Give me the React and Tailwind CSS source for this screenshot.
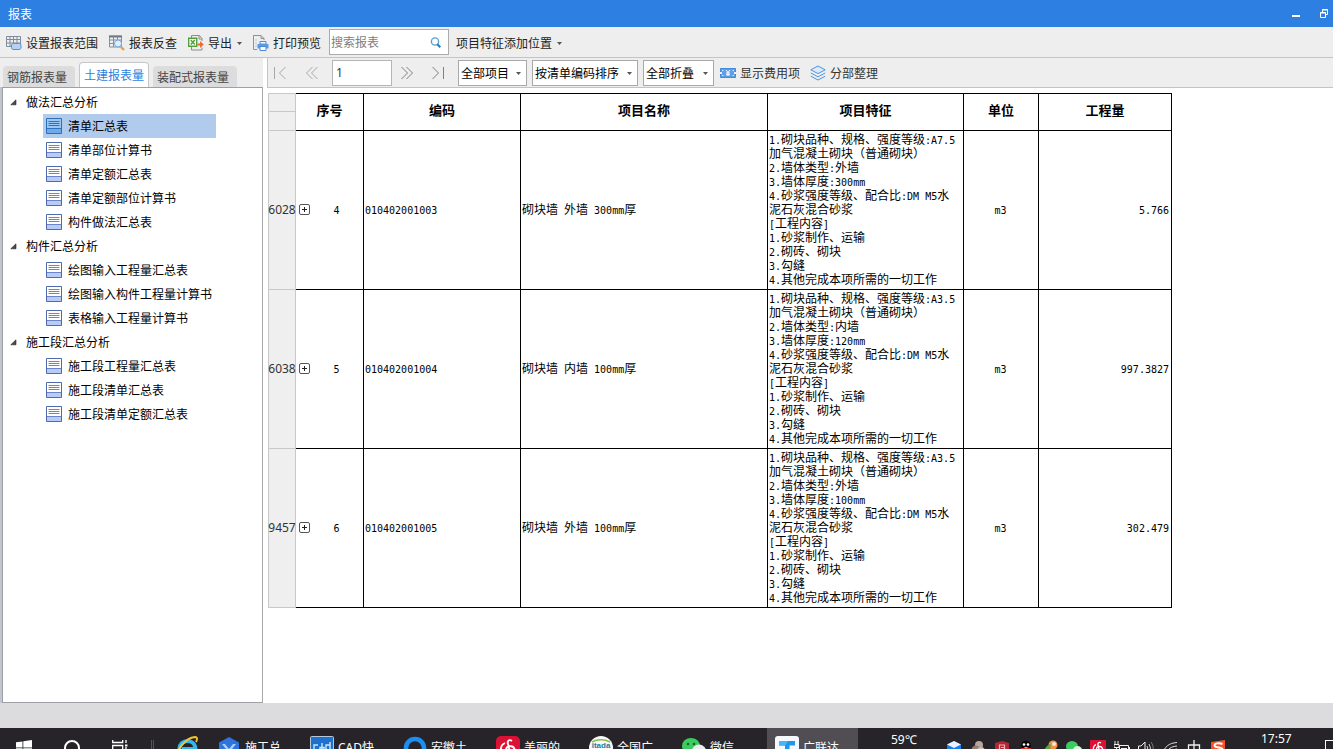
import { useState } from "react";

const tree = [
  { name: "做法汇总分析", items: ["清单汇总表", "清单部位计算书", "清单定额汇总表", "清单定额部位计算书", "构件做法汇总表"] },
  { name: "构件汇总分析", items: ["绘图输入工程量汇总表", "绘图输入构件工程量计算书", "表格输入工程量计算书"] },
  { name: "施工段汇总分析", items: ["施工段工程量汇总表", "施工段清单汇总表", "施工段清单定额汇总表"] },
];

const features = (grade, wall, thick) => [
  `1.砌块品种、规格、强度等级:${grade}`,
  "加气混凝土砌块（普通砌块）",
  `2.墙体类型:${wall}`,
  `3.墙体厚度:${thick}`,
  "4.砂浆强度等级、配合比:DM M5水",
  "泥石灰混合砂浆",
  "[工程内容]",
  "1.砂浆制作、运输",
  "2.砌砖、砌块",
  "3.勾缝",
  "4.其他完成本项所需的一切工作",
];

const rows = [
  { id: "6028", no: "4", code: "010402001003", name: "砌块墙 外墙 300mm厚", feat: features("A7.5", "外墙", "300mm"), unit: "m3", qty: "5.766" },
  { id: "6038", no: "5", code: "010402001004", name: "砌块墙 内墙 100mm厚", feat: features("A3.5", "内墙", "120mm"), unit: "m3", qty: "997.3827" },
  { id: "9457", no: "6", code: "010402001005", name: "砌块墙 外墙 100mm厚", feat: features("A3.5", "外墙", "100mm"), unit: "m3", qty: "302.479" },
];

/* Latin runs are set in a monospaced face whose advance is half of a Han character. */
function Mixed({ text }) {
  return text.split(/([\x20-\x7e]+)/).map((part, i) =>
    i % 2 ? (
      <span key={i} className="whitespace-pre font-['DejaVu_Sans_Mono',monospace] text-[10px] leading-none">{part}</span>
    ) : (
      part
    )
  );
}

function Caret({ className = "" }) {
  return (
    <svg className={className} width="5" height="3" viewBox="0 0 5 3" aria-hidden="true">
      <path d="M0 0h5L2.5 3z" fill="#555" />
    </svg>
  );
}

function RangeIcon() {
  return (
    <svg width="16" height="16" viewBox="0 0 16 16" fill="none" aria-hidden="true">
      <path d="M.5 1.500h14v10H.5zM.5 4.500h14M.5 8h14M4 1.500v10M7.500 1.500v10M11 1.500v10" stroke="#7e8c9e" />
      <path d="M7.500 8.500h5a2 2 0 0 1 2.500 2v1.500a2 2 0 0 1-2 2.500H8a2 2 0 0 1-2.500-2V11a2 2 0 0 1 2-2.500z" fill="#b5d2f3" stroke="#5b8fc9" />
    </svg>
  );
}

function CheckIcon() {
  return (
    <svg width="16" height="16" viewBox="0 0 16 16" fill="none" aria-hidden="true">
      <path d="M.5 1h12v11H.5zM.5 5h12M.5 8.500h12M4.500 1v11M8.500 1v11" stroke="#8490a0" />
      <path d="M0 .5h13v2H0z" fill="#6e7b8c" />
      <circle cx="9" cy="8.500" r="3.500" fill="#e3effc" stroke="#78a7df" />
      <path d="M12 12l3 3" stroke="#eda13e" strokeWidth="2.400" />
    </svg>
  );
}

function ExportIcon() {
  return (
    <svg width="16" height="16" viewBox="0 0 16 16" fill="none" aria-hidden="true">
      <path d="M3.500 3V.5h8l2.500 3V6M3.500 12v3H14v-2.500" stroke="#8c8c8c" fill="none" />
      <path d="M11 .5V4h3" stroke="#8c8c8c" />
      <path d="M.7 3.200h8v8h-8z" fill="#fff" stroke="#52a03c" strokeWidth="1.400" />
      <path d="M2.800 5l4 4.500M6.800 5l-4 4.500" stroke="#52a03c" strokeWidth="1.500" />
      <path d="M9.500 8.500H12V6l3.800 3.500L12 13v-2.500H9.500z" fill="#ee6c2c" />
    </svg>
  );
}

function PrintIcon() {
  return (
    <svg width="16" height="16" viewBox="0 0 16 16" fill="none" aria-hidden="true">
      <path d="M4 14.500H.5V.5h7.500l3 3V5M8 .5v3h3" stroke="#8793a3" />
      <path d="M2.500 5h1M2.500 8h1M2.500 11h1" stroke="#6ca0dc" />
      <path d="M7 6.500h6V9H7z" fill="#fff" stroke="#4a8cd8" />
      <path d="M4.500 9h11v4.500h-11z" fill="#5b9ae0" />
      <path d="M7 11.500h6v4H7z" fill="#fff" stroke="#4a8cd8" />
    </svg>
  );
}

function SheetIcon({ active }) {
  return (
    <svg width="16" height="16" viewBox="0 0 16 16" fill="none" aria-hidden="true" className="shrink-0">
      <path d="M.5.5h15v15H.5z" fill={active ? "#9cc6f3" : "#fff"} stroke={active ? "#2f6fb5" : "#5068ac"} />
      <path d="M1 11h14v4H1z" fill={active ? "#6fabea" : "#b9cbfa"} />
      <path d="M2.500 3.500h11M2.500 5.500h11M2.500 7.500h11M1 10.500h14" stroke={active ? "#2f73bd" : "#6b86c8"} />
    </svg>
  );
}

function ToolButton({ icon, children, caret }) {
  return (
    <button type="button" className="flex items-center gap-1 whitespace-nowrap">
      {icon}
      <span>{children}</span>
      {caret && <Caret className="ml-px" />}
    </button>
  );
}

function Pick({ label, width, options }) {
  return (
    <div className={`relative h-[26px] ${width}`}>
      <select aria-label={label} className="h-full w-full appearance-none border border-[#a9a9a9] bg-white pl-[2px] text-xs text-black outline-none">
        {options.map((o) => (
          <option key={o}>{o}</option>
        ))}
      </select>
      <Caret className="pointer-events-none absolute right-[6px] top-[12px]" />
    </div>
  );
}

function PageButton({ label, d, dim }) {
  return (
    <button type="button" aria-label={label} className="flex h-full w-6 items-center justify-center">
      <svg width="14" height="14" viewBox="0 0 14 14" fill="none" stroke={dim ? "#a8a8a8" : "#808080"} aria-hidden="true">
        <path d={d} />
      </svg>
    </button>
  );
}

function TitleBar() {
  return (
    <header className="flex h-[27px] shrink-0 items-center bg-[#2d80e1] pl-2 text-xs text-white">
      <h1>报表</h1>
      <div className="ml-auto flex gap-[10px]">
        <button type="button" aria-label="最小化" className="flex h-[27px] w-[18px] items-center justify-center">
          <svg width="8" height="9" viewBox="0 0 8 9" aria-hidden="true"><path d="M0 6h8v2H0z" fill="#fff" /></svg>
        </button>
        <button type="button" aria-label="还原" className="flex h-[27px] w-[18px] items-center justify-center">
          <svg width="8" height="9" viewBox="0 0 8 9" fill="none" stroke="#fff" aria-hidden="true">
            <path d="M2.500 3V.5h5v5H6M2 1h6" />
            <path d="M.5 3.500h5v5h-5zM0 4h6" />
          </svg>
        </button>
      </div>
    </header>
  );
}

function Toolbar() {
  return (
    <div className="flex h-[31px] shrink-0 items-center border-b border-[#c4c4c4] bg-[#eee] pl-[6px] text-xs text-[#222]">
      <div className="flex items-center gap-[11px] pt-[2px]">
        <ToolButton icon={<RangeIcon />}>设置报表范围</ToolButton>
        <ToolButton icon={<CheckIcon />}>报表反查</ToolButton>
        <ToolButton icon={<ExportIcon />} caret>导出</ToolButton>
        <ToolButton icon={<PrintIcon />}>打印预览</ToolButton>
      </div>
      <div className="ml-2 mr-[7px] flex h-[26px] w-[120px] items-center border border-[#ababab] bg-white pr-[7px]">
        <input type="search" aria-label="搜索报表" placeholder="搜索报表" className="w-full min-w-0 flex-1 pl-px text-xs outline-none placeholder:text-[#808080]" />
        <svg width="11" height="11" viewBox="0 0 11 11" fill="none" aria-hidden="true">
          <circle cx="5" cy="4.500" r="3.600" stroke="#5a9fd0" strokeWidth="1.400" />
          <path d="M7.300 7.300l3 3" stroke="#2f78b4" strokeWidth="2" />
        </svg>
      </div>
      <div className="flex pt-[2px]">
        <ToolButton caret>项目特征添加位置</ToolButton>
      </div>
    </div>
  );
}

function Sidebar() {
  const [selected, setSelected] = useState("清单汇总表");
  const [closed, setClosed] = useState({});
  const tabs = ["钢筋报表量", "土建报表量", "装配式报表量"];
  return (
    <aside className="flex w-[263px] shrink-0 flex-col bg-[#eee] text-xs">
      <div role="tablist" className="flex h-[29px] shrink-0 items-end gap-1 pl-[3px]">
        {tabs.map((t, i) => (
          <button
            key={t}
            type="button"
            role="tab"
            aria-selected={i === 1}
            className={
              i === 1
                ? "h-[25px] rounded-t border border-b-0 border-[#c6c6c6] bg-white px-1 text-[#2d7fe0]"
                : "h-[21px] rounded-t bg-[#dcdcdc] pl-1 pr-2 text-[#444]"
            }
          >
            {t}
          </button>
        ))}
      </div>
      <div className="flex min-h-0 flex-1 bg-[#c3c5cd] pl-[2px]">
        <nav aria-label="报表" className="flex-1 overflow-hidden border border-[#9da0a6] border-r-[#a8a8a8] bg-white pt-[2px] text-black">
          {tree.map((g) => (
            <div key={g.name}>
              <button
                type="button"
                aria-expanded={!closed[g.name]}
                onClick={() => setClosed({ ...closed, [g.name]: !closed[g.name] })}
                className="flex h-6 items-center gap-[9px] pl-[7px]"
              >
                <svg width="7" height="7" viewBox="0 0 7 7" aria-hidden="true"><path d="M6 .8v5H.8z" fill="#4a4a4a" stroke="#222" strokeWidth=".6" /></svg>
                {g.name}
              </button>
              {!closed[g.name] && (
                <ul className="pl-10">
                  {g.items.map((it) => (
                    <li key={it}>
                      <button
                        type="button"
                        onClick={() => setSelected(it)}
                        className={`flex h-6 w-[173px] items-center gap-[6px] whitespace-nowrap pl-[3px] ${selected === it ? "bg-[#b1cbed]" : ""}`}
                      >
                        <SheetIcon active={selected === it} />
                        {it}
                      </button>
                    </li>
                  ))}
                </ul>
              )}
            </div>
          ))}
        </nav>
      </div>
    </aside>
  );
}

function ReportBar() {
  return (
    <div className="flex h-[30px] shrink-0 items-center border-b border-l border-[#c4c4c4] bg-[#eee] text-xs text-[#333]">
      <div className="flex h-full gap-2">
        <PageButton dim label="第一页" d="M1.500 1v12M12.500 1l-6 6 6 6" />
        <PageButton dim label="上一页" d="M7.500 1l-6 6 6 6M12.500 1l-6 6 6 6" />
      </div>
      <input aria-label="页码" defaultValue="1" className="ml-2 h-[26px] w-[60px] border border-[#b5b5b5] bg-white pl-[3px] font-['Noto_Sans',sans-serif] outline-none" />
      <div className="ml-[3px] flex h-full gap-[7px]">
        <PageButton label="下一页" d="M1.500 1l6 6-6 6M6.500 1l6 6-6 6" />
        <PageButton label="最后一页" d="M1.500 1l6 6-6 6M12.500 1v12" />
      </div>
      <div className="ml-2 flex gap-[5px]">
        <Pick label="项目" width="w-[69px]" options={["全部项目"]} />
        <Pick label="排序" width="w-[106px]" options={["按清单编码排序"]} />
        <Pick label="折叠" width="w-[71px]" options={["全部折叠"]} />
      </div>
      <div className="ml-[6px] flex gap-[10px]">
        <ToolButton
          icon={
            <svg width="16" height="16" viewBox="0 0 16 16" fill="none" aria-hidden="true">
              <path d="M.5 3.500h15v9H.5z" fill="#5d9ee6" stroke="#4389dc" />
              <path d="M6 5l2 2.500L10 5M8 7.500V11M6 8h4M6 9.700h4" stroke="#fff" />
              <path d="M2 5.500h1.500M2 10.500h1.500M12.500 5.500H14M12.500 10.500H14" stroke="#d8e9fb" />
              <path d="M0 7v2h2V7zM14 7v2h2V7z" fill="#eee" />
            </svg>
          }
        >
          显示费用项
        </ToolButton>
        <ToolButton
          icon={
            <svg width="16" height="16" viewBox="0 0 16 16" fill="none" stroke="#4d94df" aria-hidden="true">
              <path d="M8 1l7.200 3.800L8 8.600.8 4.800z" fill="#dcebfb" />
              <path d="M.8 8L8 11.800 15.200 8M.8 11.200L8 15l7.200-3.800" />
            </svg>
          }
        >
          分部整理
        </ToolButton>
      </div>
    </div>
  );
}

function ReportTable() {
  const head = "border-b border-r border-t border-black px-0 pt-0 pb-1 text-[13px] font-bold";
  const cell = "border-b border-r border-black pb-[2px] pl-px pr-[2px] pt-0";
  const side = "border-b border-x border-[#c8c8c8] bg-[#efefef] p-0";
  return (
    <table className="w-[904px] table-fixed border-separate border-spacing-0 font-['Noto_Sans_CJK_SC',sans-serif] text-xs leading-[14px] text-black">
      <colgroup>
        <col className="w-[28px]" />
        <col className="w-[68px]" />
        <col className="w-[157px]" />
        <col className="w-[247px]" />
        <col className="w-[196px]" />
        <col className="w-[75px]" />
        <col className="w-[133px]" />
      </colgroup>
      <thead>
        <tr className="h-[19px]">
          <td className={`${side} border-t`} />
          {["序号", "编码", "项目名称", "项目特征", "单位", "工程量"].map((h) => (
            <th key={h} rowSpan={2} scope="col" className={head}>{h}</th>
          ))}
        </tr>
        <tr className="h-[19px]">
          <td className={side} />
        </tr>
      </thead>
      <tbody>
        {rows.map((r) => (
          <tr key={r.id} className="h-[159px]">
            <th scope="row" className={`${side} font-['Noto_Sans',sans-serif] text-xs font-normal text-[#333]`}>
              <div className="flex justify-center">{r.id}</div>
            </th>
            <td className="border-b border-r border-black px-0 pb-[2px] pt-0">
              <div className="flex items-center pl-[3px]">
                <button type="button" aria-label="展开" className="flex">
                  <svg width="11" height="11" viewBox="0 0 11 11" fill="none" aria-hidden="true">
                    <rect x=".5" y=".5" width="10" height="10" rx="1.500" stroke="#555" />
                    <path d="M3 5.500h5M5.500 3v5" stroke="#222" />
                  </svg>
                </button>
                <span className="flex-1 text-center"><Mixed text={r.no} /></span>
              </div>
            </td>
            <td className={cell}><Mixed text={r.code} /></td>
            <td className={cell}><Mixed text={r.name} /></td>
            <td className={cell}>
              {r.feat.map((line) => (
                <div key={line} className="h-[14px] whitespace-nowrap"><Mixed text={line} /></div>
              ))}
            </td>
            <td className={`${cell} text-center`}><Mixed text={r.unit} /></td>
            <td className={`${cell} text-right`}><Mixed text={r.qty} /></td>
          </tr>
        ))}
      </tbody>
    </table>
  );
}

const apps = [
  {
    name: "施工总",
    icon: (
      <>
        <path d="M12 1l10 5.500v11L12 23 2 17.500v-11z" fill="#2f74dc" />
        <path d="M5 8h3l4 5 4-5h3l-5.500 7v5h-3v-5z" fill="#a9cdfa" />
        <path d="M15 13h8v10h-8z" fill="#3cb45a" />
      </>
    ),
  },
  {
    name: "CAD快",
    icon: (
      <>
        <rect x=".5" y=".5" width="23" height="23" rx="1" fill="#1c72cc" stroke="#b9c6d4" />
        <path d="M8 9H4v6h4M10 15v-3.500h4V15M12 7v11M20 6v9h-4V9h4" fill="none" stroke="#cfe5fb" strokeWidth="1.400" />
      </>
    ),
  },
  { name: "安徽土", icon: <circle cx="12" cy="12" r="9" fill="none" stroke="#1e8df0" strokeWidth="4.500" /> },
  {
    name: "美丽的",
    icon: (
      <>
        <rect width="24" height="24" rx="5" fill="#dd1133" />
        <path d="M16 5c-3-2-5 0-4 3l1.500 6c.6 3-3.500 3-3.500 0 0-4 7-5.500 8.500-1 1.500 5-2.500 8-6.500 8-8 0-9.500-11-3-14" fill="none" stroke="#fff" strokeWidth="1.900" />
      </>
    ),
  },
  {
    name: "全国广",
    icon: (
      <>
        <circle cx="12" cy="12" r="12" fill="#f7f9f8" />
        <path d="M3 6c5-3 13-3 18 0" fill="none" stroke="#8abf4e" strokeWidth="1.500" />
        <text x="12" y="12" textAnchor="middle" fontSize="8" fontWeight="bold" fontFamily="Liberation Sans" fill="#2179a8">itada</text>
      </>
    ),
  },
  {
    name: "微信",
    icon: (
      <>
        <ellipse cx="9" cy="10" rx="9" ry="8" fill="#3ccb5e" />
        <circle cx="6" cy="8" r="1.200" fill="#165c2a" />
        <circle cx="12" cy="8" r="1.200" fill="#165c2a" />
        <ellipse cx="17" cy="15" rx="7" ry="6.500" fill="#ececec" />
      </>
    ),
  },
  {
    name: "广联达",
    active: true,
    icon: (
      <>
        <rect width="24" height="24" rx="3" fill="#f4f9fd" />
        <path d="M4 5h16v4.500h-5.500V20h-4.500V9.500H4z" fill="#1f96ea" />
        <path d="M4 5h9l-3 4.500H4z" fill="#45b6f7" />
      </>
    ),
  },
];

const tray = [
  { name: "云盘", d: <><path d="M8 1l7 3.500v7L8 15l-7-3.500v-7z" fill="#1a7fe8" /><path d="M8 1l7 3.500L8 8 1 4.500z" fill="#e8f3fe" /></> },
  { name: "助手", d: <><circle cx="9" cy="5" r="4" fill="#b7a79c" /><circle cx="6" cy="10" r="4.500" fill="#8f7f77" /><circle cx="11" cy="11" r="4" fill="#c9bdb4" /></> },
  { name: "安全", d: <><path d="M8 1l7 2v6c0 4-4 6-7 7-3-1-7-3-7-7V3z" fill="#b32732" /><path d="M5.500 5h5v6h-5zM7 7.500h3" fill="none" stroke="#eab6ba" strokeWidth="1.200" /></> },
  { name: "QQ", d: <><ellipse cx="8" cy="6" rx="5" ry="5.500" fill="#0a0a0a" /><path d="M3 8h10l1.500 6h-13z" fill="#d93025" /><circle cx="6" cy="4.500" r="1.300" fill="#fff" /><circle cx="10" cy="4.500" r="1.300" fill="#fff" /><path d="M5.500 7h5l-2.500 1.500z" fill="#f5b21e" /></> },
  { name: "管家", d: <><circle cx="11" cy="5" r="4.500" fill="#f0934a" /><circle cx="12" cy="4" r="2" fill="#fde6cc" /><path d="M2 14c0-6 3-9 7-10-1 5-1 9-4 12z" fill="#59a63c" /></> },
  { name: "微信", d: <><ellipse cx="6" cy="6.500" rx="6" ry="5.500" fill="#3ccb5e" /><ellipse cx="11.500" cy="10" rx="4.500" ry="4" fill="#d8f4de" /></> },
  { name: "音乐", d: <><rect width="16" height="16" rx="1" fill="#dd1133" /><path d="M11 3c-2-1.500-3.500 0-3 2l1 4c.4 2-2.500 2-2.500 0 0-3 5-3.500 6-.5 1 3.500-2 5-4.500 5-5.500 0-6-7-2-9" fill="none" stroke="#fff" strokeWidth="1.300" /></> },
  { name: "电源", d: <path d="M1 1v3M4 1v3M0 4.500h5v3H0zM2.500 8v3H5M5.500 5.500h9v6h-9zM15.500 7v3M7 8.500h6" fill="none" stroke="#eee" /> },
  { name: "音量", d: <><path d="M.5 6h2.500l4-4v12l-4-4H.5z" fill="none" stroke="#eee" /><path d="M9 6q1.500 2 0 4M11 4q3 4 0 8" fill="none" stroke="#ccc" /><path d="M13 2q4.500 6 0 12" fill="none" stroke="#777" /></> },
  { name: "网络", d: <path d="M1 14C2 7 7 3 15 2.500M4.500 14c1-5 4.500-7.500 10.500-8M8.500 14c.5-3 3-4.500 6.500-5" fill="none" stroke="#ddd" /> },
  { name: "输入法", d: <path d="M8 0v16M2.500 5h11v6h-11z" fill="none" stroke="#eee" strokeWidth="1.300" /> },
  { name: "搜狗", d: <><path d="M1 2l14-2v14L1 16z" fill="#f2552c" /><path d="M12.500 4c-4-1.500-8-.5-8 1.500 0 3 8 1 8 4 0 2.500-5 3-9 1.500" fill="none" stroke="#fff" strokeWidth="1.900" /></> },
];

function Taskbar() {
  const square = "flex h-10 w-12 items-center justify-center";
  return (
    <footer className="h-[21px] shrink-0 overflow-hidden bg-[#262428] font-['Noto_Sans','Noto_Sans_CJK_SC',sans-serif] text-xs text-white">
      <div className="flex h-10 items-center">
        <button type="button" aria-label="开始" className={square}>
          <svg width="16" height="16" viewBox="0 0 16 16" fill="#fff" aria-hidden="true"><path d="M0 2.300l6.500-.9v6.100H0zM7.300 1.300L16 0v7.500H7.300zM0 8.300h6.500v6.200L0 13.600zM7.300 8.300H16V16l-8.700-1.300z" /></svg>
        </button>
        <button type="button" aria-label="搜索" className={square}>
          <svg width="16" height="16" viewBox="0 0 16 16" fill="none" stroke="#fff" strokeWidth="2" aria-hidden="true"><circle cx="8" cy="8" r="7" /></svg>
        </button>
        <button type="button" aria-label="任务视图" className={square}>
          <svg width="16" height="16" viewBox="0 0 16 16" fill="none" stroke="#fff" strokeWidth="1.300" aria-hidden="true"><path d="M.7 0v2.500h10V0M.7 5.500h10v6H.7zM.7 16v-2h10v2M14 0v3M14 7v9" /><path d="M13 4.500h2.500v2H13z" fill="#fff" stroke="none" /></svg>
        </button>
        <div className="ml-[7px] h-4 w-[3px] border-x border-[#55535a]" />
        <button type="button" aria-label="浏览器" className="ml-[11px] flex w-11 justify-center">
          <svg width="24" height="24" viewBox="0 0 24 24" fill="none" aria-hidden="true">
            <path d="M20 17c-2 4-8 5-12 2s-5-8-1-12c5-4 13-2 13.500 6H7" stroke="#35b5ee" strokeWidth="4" />
            <path d="M2 22C0 16 10 2 20 1c3 0 2 3 1 5" stroke="#f3c62f" strokeWidth="1.800" />
          </svg>
        </button>
        {apps.map((a) => (
          <button key={a.name} type="button" className={`flex h-10 items-center gap-1 pl-2 ${a.active ? "w-[91px] bg-[#504e53]" : "w-[93px]"}`}>
            <svg width="24" height="24" viewBox="0 0 24 24" aria-hidden="true">{a.icon}</svg>
            <span className="whitespace-nowrap">{a.name}</span>
          </button>
        ))}
        <div className="ml-auto flex h-10 items-center">
          <span className="h-10 w-[51px] pt-1 leading-4">59℃</span>
          {tray.map((t, i) => (
            <button key={i} type="button" aria-label={t.name} className="flex w-6 justify-center">
              <svg width="16" height="16" viewBox="0 0 16 16" aria-hidden="true">{t.d}</svg>
            </button>
          ))}
          <time className="ml-[31px] h-10 w-16 pt-[3px] leading-4">17:57</time>
          <button type="button" aria-label="通知" className="h-4 w-2 border border-r-0 border-white" />
        </div>
      </div>
    </footer>
  );
}

export default function App() {
  return (
    <div className="flex h-screen flex-col overflow-hidden bg-white font-['Noto_Sans_CJK_SC','Noto_Sans',sans-serif]">
      <TitleBar />
      <Toolbar />
      <div className="flex min-h-0 flex-1">
        <Sidebar />
        <main className="flex min-w-0 flex-1 flex-col pl-1">
          <ReportBar />
          <div className="min-h-0 flex-1 overflow-hidden pl-px pt-[5px]">
            <ReportTable />
          </div>
        </main>
      </div>
      <div className="h-[25px] shrink-0 bg-[#dcdcde]" />
      <Taskbar />
    </div>
  );
}
